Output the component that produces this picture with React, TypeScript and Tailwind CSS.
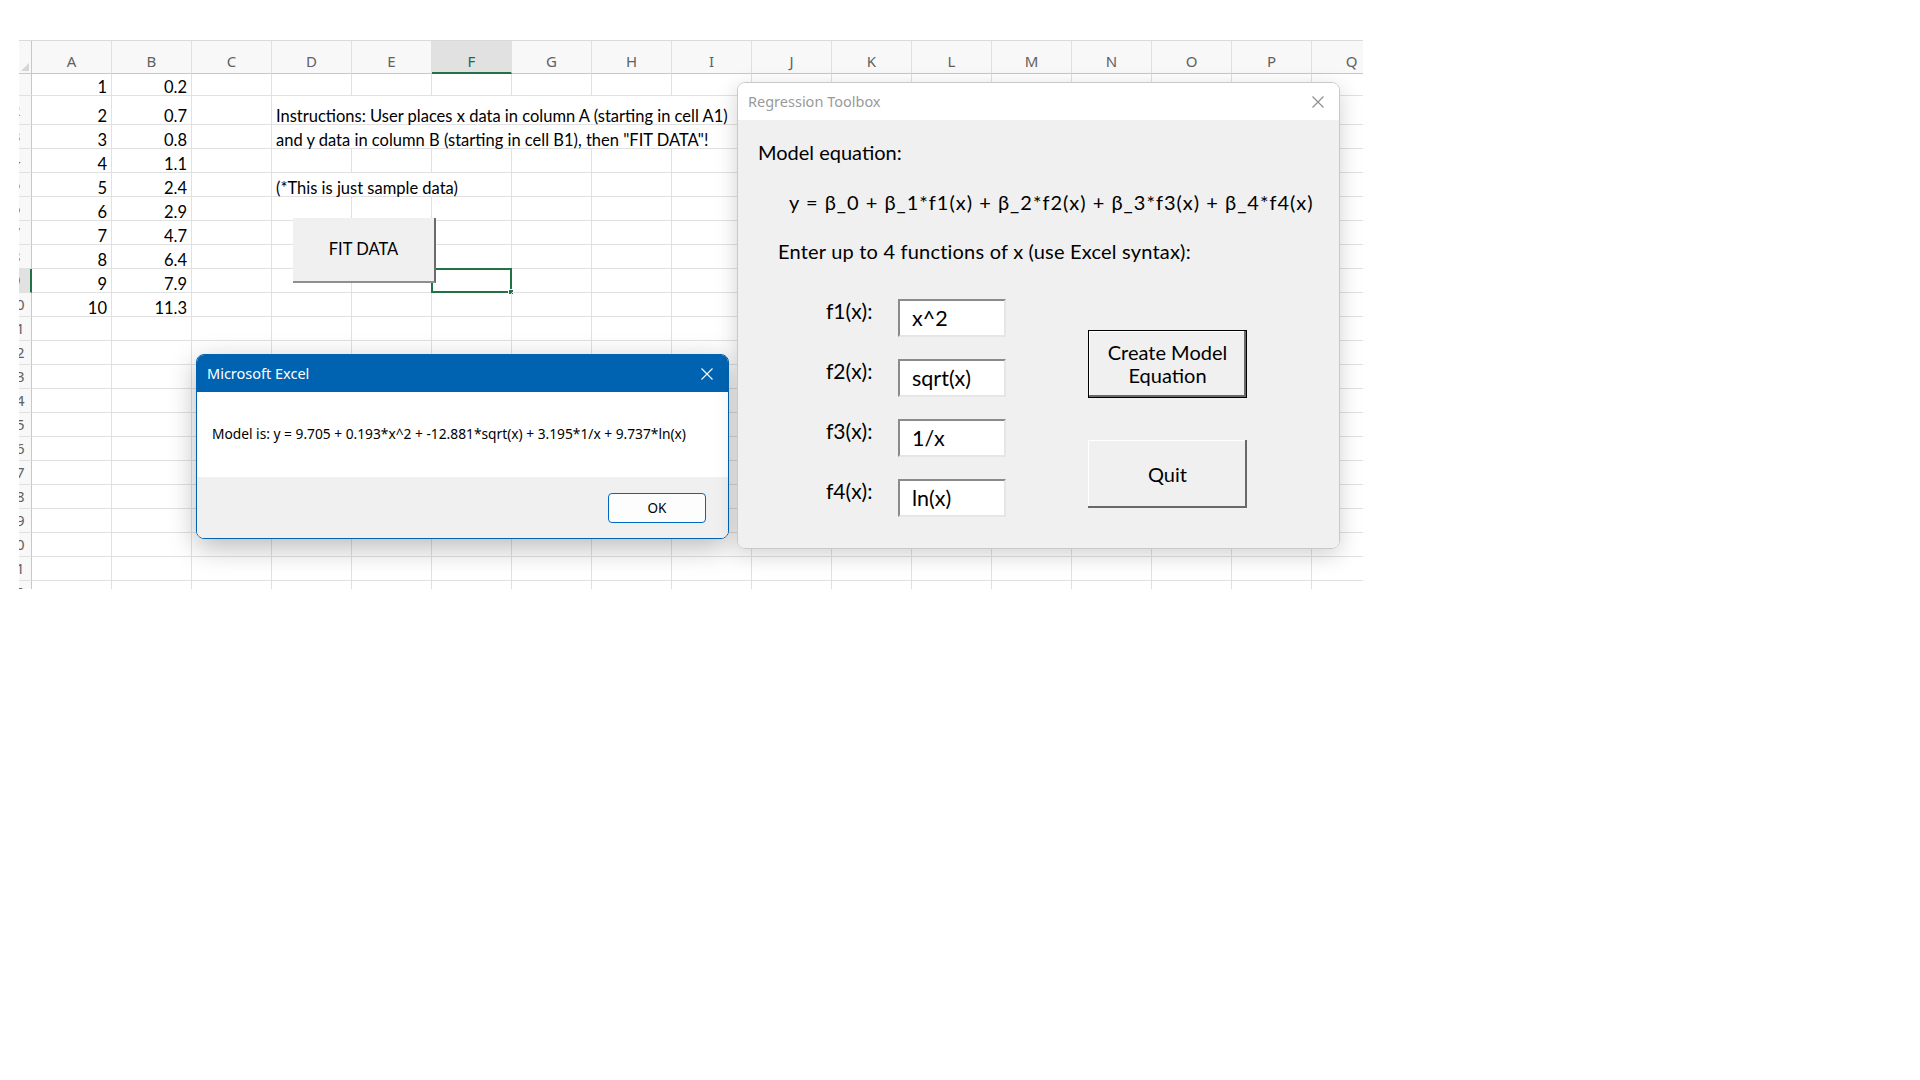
import React from "react";

const COLS = "ABCDEFGHIJKLMNOPQ".split("");
const B_VALUES = ["0.2", "0.7", "0.8", "1.1", "2.4", "2.9", "4.7", "6.4", "7.9", "11.3"];

const ROW_HEIGHT: Record<number, string> = { 1: "h-[22px]", 2: "h-[29px]" };

// text in D that spills over the next cells, hiding their gridlines
const SPILL: Record<number, { span: string; count: number; text: string }> = {
  2: { span: "col-span-6", count: 6, text: "Instructions: User places x data in column A (starting in cell A1)" },
  3: { span: "col-span-6", count: 6, text: 'and y data in column B (starting in cell B1), then "FIT DATA"!' },
  5: { span: "col-span-3", count: 3, text: "(*This is just sample data)" },
};

const SEGOE = "font-['Noto_Sans','Open_Sans',sans-serif]";
const CALIBRI = "font-['Lato','Noto_Sans',sans-serif]";

function CloseIcon({ className }: { className: string }) {
  return (
    <svg viewBox="0 0 12 12" className={className} fill="none" stroke="currentColor" strokeWidth="1.1">
      <path d="M0.5 0.5L11.5 11.5M11.5 0.5L0.5 11.5" />
    </svg>
  );
}

function HeaderRow() {
  return (
    <div className="grid h-[34px] grid-cols-[13px_repeat(17,80px)] border-t border-[#dadada] bg-[#f8f8f8]">
      <div className="flex items-end justify-end border-r border-b border-[#c8c8c8] p-[2px]">
        <svg viewBox="0 0 8 8" className="h-[8px] w-[8px]">
          <path d="M8 0L8 8L0 8Z" fill="#d6d6d6" />
        </svg>
      </div>
      {COLS.map((c) => {
        const active = c === "F";
        return (
          <div
            key={c}
            className={
              active
                ? "flex items-end justify-center border-r border-b-2 border-r-[#e0e0e0] border-b-[#217346] bg-[#e1e1e1] pb-[1px] text-[15px] leading-[20px] text-[#1e6b41]"
                : "flex items-end justify-center border-r border-b border-r-[#e0e0e0] border-b-[#c8c8c8] pb-[2px] text-[15px] leading-[20px] text-[#616161]"
            }
          >
            {c}
          </div>
        );
      })}
    </div>
  );
}

function SheetRow({ n }: { n: number }) {
  const spill = SPILL[n];
  const cells: React.ReactNode[] = [];
  for (let i = 0; i < COLS.length; i++) {
    const base = "flex items-end whitespace-nowrap border-r border-b border-[#e1e1e1] text-[16.5px] leading-[16px] text-black";
    if (spill && i === 3) {
      cells.push(
        <div key={i} className={`${base} ${spill.span} pl-[4px]`}>
          {spill.text}
        </div>
      );
      i += spill.count - 1;
      continue;
    }
    let value = "";
    if (n <= 10 && i === 0) value = String(n);
    if (n <= 10 && i === 1) value = B_VALUES[n - 1];
    const selected = n === 9 && COLS[i] === "F";
    cells.push(
      <div key={i} className={`${base} relative justify-end pr-[4px]`}>
        {value}
        {selected && (
          <div className="absolute -top-[1px] -left-[1px] h-[25px] w-[81px] border-2 border-[#217346]">
            <div className="absolute -right-[4px] -bottom-[4px] h-[6px] w-[6px] border border-white bg-[#217346]" />
          </div>
        )}
      </div>
    );
  }
  const rowActive = n === 9;
  return (
    <div className={`grid grid-cols-[13px_repeat(17,80px)] ${ROW_HEIGHT[n] ?? "h-[24px]"}`}>
      <div
        className={
          rowActive
            ? "overflow-hidden border-r-2 border-b border-r-[#217346] border-b-[#e1e1e1] bg-[#e1e1e1]"
            : "overflow-hidden border-r border-b border-r-[#c8c8c8] border-b-[#e1e1e1] bg-[#f8f8f8]"
        }
      >
        <div
          className={`-ml-[20px] flex h-full w-[34px] items-center justify-center ${SEGOE} text-[15px] ${rowActive ? "text-[#1e6b41]" : "text-[#616161]"}`}
        >
          {n}
        </div>
      </div>
      {cells}
    </div>
  );
}

function Sheet() {
  const rows = Array.from({ length: 22 }, (_, i) => i + 1);
  return (
    <div className={`ml-[19px] h-[549px] w-[1344px] overflow-hidden ${CALIBRI}`}>
      <div className={SEGOE}>
        <HeaderRow />
      </div>
      {rows.map((n) => (
        <SheetRow key={n} n={n} />
      ))}
    </div>
  );
}

function FitDataButton() {
  return (
    <div
      className={`absolute top-[218px] left-[293px] flex h-[65px] w-[143px] items-center justify-center border-r-2 border-b-2 border-r-[#6b6b6b] border-b-[#8f8f8f] bg-[#f0f0f0] text-[16.5px] text-black ${CALIBRI}`}
    >
      FIT DATA
    </div>
  );
}

function FunctionRow({ label, value }: { label: string; value: string }) {
  return (
    <div className="flex h-[38px] items-start">
      <div className="w-[72px] text-[21px] leading-[24px]">{label}</div>
      <div className="flex h-[38px] w-[108px] items-center border-2 border-t-[#8a8a8a] border-l-[#8a8a8a] border-r-[#e6e6e6] border-b-[#e6e6e6] bg-white pl-[12px] text-[21.5px]">
        {value}
      </div>
    </div>
  );
}

function RegressionToolbox() {
  return (
    <div className="absolute top-[82px] left-[737px] flex h-[467px] w-[603px] flex-col overflow-hidden rounded-lg border border-[#c9c9c9] shadow-[0_6px_22px_rgba(0,0,0,0.18)]">
      <div className="flex h-[37px] items-center justify-between bg-white pr-[15px] pl-[10px]">
        <span className={`text-[14.5px] text-[#9a9a9a] ${SEGOE}`}>Regression Toolbox</span>
        <CloseIcon className="h-[12px] w-[12px] text-[#8c8c8c]" />
      </div>
      <div className={`flex-1 bg-[#f0f0f0] pt-[20px] pl-[20px] text-black ${CALIBRI}`}>
        <div className="text-[20px] leading-[24px]">Model equation:</div>
        <div className="mt-[26px] ml-[31px] text-[20px] leading-[24px] tracking-[1px]">
          y = β_0 + β_1*f1(x) + β_2*f2(x) + β_3*f3(x) + β_4*f4(x)
        </div>
        <div className="mt-[25px] ml-[20px] text-[20px] leading-[24px] tracking-[0.2px]">
          Enter up to 4 functions of x (use Excel syntax):
        </div>
        <div className="mt-[36px] ml-[68px] flex">
          <div className="flex flex-col gap-[22px]">
            <FunctionRow label="f1(x):" value="x^2" />
            <FunctionRow label="f2(x):" value="sqrt(x)" />
            <FunctionRow label="f3(x):" value="1/x" />
            <FunctionRow label="f4(x):" value="ln(x)" />
          </div>
          <div className="ml-[82px] flex flex-col pt-[31px]">
            <div className="flex h-[68px] w-[159px] flex-col items-center justify-center border border-black bg-[#f0f0f0] text-[20px] leading-[23px] shadow-[inset_-2px_-2px_0_#696969,inset_1px_1px_0_#ffffff]">
              <span>Create Model</span>
              <span>Equation</span>
            </div>
            <div className="mt-[42px] flex h-[68px] w-[159px] items-center justify-center bg-[#f0f0f0] text-[20px] shadow-[inset_-2px_-2px_0_#696969,inset_1px_1px_0_#ffffff,inset_-1px_-1px_0_#a0a0a0]">
              Quit
            </div>
          </div>
        </div>
      </div>
    </div>
  );
}

function ExcelMessage() {
  return (
    <div
      className={`absolute top-[354px] left-[196px] flex h-[185px] w-[533px] flex-col overflow-hidden rounded-lg border border-[#0063b1] shadow-[0_8px_28px_rgba(0,0,0,0.28)] ${SEGOE}`}
    >
      <div className="flex h-[37px] items-center justify-between bg-[#0063b1] pr-[15px] pl-[10px]">
        <span className="text-[14.5px] text-white">Microsoft Excel</span>
        <CloseIcon className="h-[12px] w-[12px] text-white" />
      </div>
      <div className="flex h-[85px] items-center bg-white pl-[15px] text-[13.75px] text-black">
        Model is: y = 9.705 + 0.193*x^2 + -12.881*sqrt(x) + 3.195*1/x + 9.737*ln(x)
      </div>
      <div className="flex flex-1 items-start justify-end bg-[#f0f0f0] pt-[16px] pr-[22px]">
        <div className="flex h-[30px] w-[98px] items-center justify-center rounded-[4px] border border-[#0067c0] bg-[#fdfdfd] text-[13.5px] text-black">
          OK
        </div>
      </div>
    </div>
  );
}

export default function App() {
  return (
    <div className="relative h-[1080px] w-[1920px] overflow-hidden bg-white pt-[40px]">
      <Sheet />
      <FitDataButton />
      <ExcelMessage />
      <RegressionToolbox />
    </div>
  );
}
